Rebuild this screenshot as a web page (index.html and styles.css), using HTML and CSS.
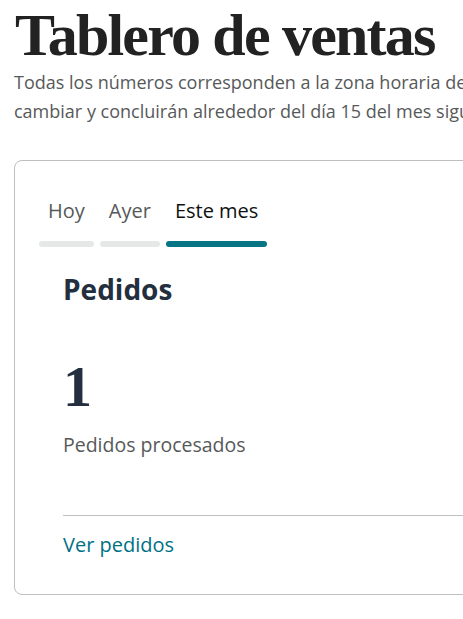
FILE: index.html
```html
<!DOCTYPE html>
<html lang="es">
<head>
<meta charset="utf-8">
<title>Tablero de ventas</title>
<link rel="stylesheet" href="styles.css">
</head>
<body>
<main class="page">
  <h1 class="page-title">Tablero de ventas</h1>
  <p class="page-note">Todas los números corresponden a la zona horaria del Pacífico. Las estimaciones de ventas y regalías pueden<br>cambiar y concluirán alrededor del día 15 del mes siguiente.</p>

  <section class="card">
    <nav class="tabs">
      <div class="tab"><span class="tab-label">Hoy</span><span class="tab-bar"></span></div>
      <div class="tab"><span class="tab-label">Ayer</span><span class="tab-bar"></span></div>
      <div class="tab tab-active"><span class="tab-label">Este mes</span><span class="tab-bar"></span></div>
    </nav>
    <div class="card-body">
      <h2 class="card-title">Pedidos</h2>
      <div class="metric">1</div>
      <div class="metric-label">Pedidos procesados</div>
      <hr class="divider">
      <a class="card-link" href="#">Ver pedidos</a>
    </div>
  </section>
</main>
</body>
</html>
```
FILE: styles.css
```css
html, body {
  margin: 0;
  padding: 0;
  overflow: hidden;
  background: #ffffff;
}

body {
  font-family: "Open Sans", "Noto Sans", sans-serif;
  color: #0f1111;
}

.page {
  width: 1100px;
  padding: 2px 14px 0 14px;
}

.page-title {
  margin: 0;
  font-family: "Liberation Serif", serif;
  font-weight: 700;
  font-size: 60px;
  line-height: 66px;
  letter-spacing: -1.8px;
  color: #222222;
  padding-left: 1px;
}

.page-note {
  margin: 0;
  font-size: 18px;
  line-height: 29px;
  color: #565959;
  white-space: nowrap;
}

.card {
  margin-top: 34px;
  border: 1px solid #bbbfbf;
  border-radius: 8px;
  padding: 37px 24px 36px 24px;
  width: 900px;
}

.tabs {
  display: flex;
  gap: 6px;
}

.tab {
  display: flex;
  flex-direction: column;
}

.tab-label {
  padding: 0 9px;
  font-size: 20px;
  line-height: 26px;
  color: #565959;
}

.tab-bar {
  margin-top: 17px;
  height: 6px;
  border-radius: 3px;
  background: #e6e7e7;
}

.tab-active .tab-label {
  color: #0f1111;
}

.tab-active .tab-bar {
  background: #077583;
}

.card-body {
  padding: 0 24px;
}

.card-title {
  margin: 24px 0 0 0;
  font-size: 28px;
  line-height: 36px;
  font-weight: 700;
  color: #232f3e;
}

.metric {
  margin-top: 48px;
  font-family: "Liberation Serif", serif;
  font-weight: 700;
  font-size: 58px;
  line-height: 64px;
  color: #232f3e;
}

.metric-label {
  margin-top: 13px;
  font-size: 19.5px;
  line-height: 26px;
  color: #565959;
}

.divider {
  margin: 57px 0 0 0;
  border: 0;
  height: 1px;
  background: #bbbfbf;
}

.card-link {
  display: block;
  margin-top: 16px;
  font-size: 20px;
  line-height: 26px;
  color: #007185;
  text-decoration: none;
}
```
